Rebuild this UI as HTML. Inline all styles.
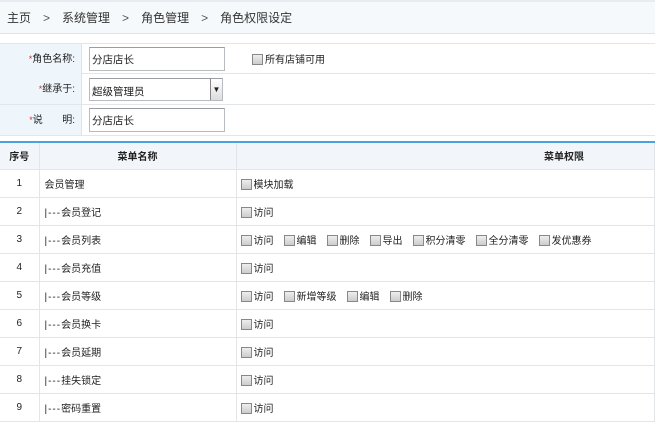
<!DOCTYPE html>
<html><head><meta charset="utf-8"><style>
*{margin:0;padding:0;box-sizing:border-box}
body{width:655px;height:413px;overflow:hidden;background:#fff;font-family:"Liberation Sans","Noto Sans CJK SC",sans-serif;font-size:10px;color:#222}
.bc{height:34px;background:#f6f9fc;border-bottom:1px solid #dde3e8;border-top:2px solid #e8ecf0;line-height:32px;padding-left:7px;font-size:12px;color:#333}
.bc span{margin:0 12px;color:#555}
.form{position:absolute;top:43px;left:0;width:655px}
.fr{height:31px;border-bottom:1px solid #e3e6e9;position:relative}
.fr:first-child{border-top:1px solid #e3e6e9}
.lab{position:absolute;left:0;top:0;width:82px;height:30px;background:#eef5fb;border-right:1px solid #dde3e8;text-align:right;padding-right:6px;line-height:30px;font-size:10px}
.lab b{color:#d33;font-weight:normal;font-size:9px}
.inp{position:absolute;left:89px;top:3px;width:136px;height:24px;border:1px solid #b8bcc0;border-top-color:#9a9ea2;display:flex;align-items:center;padding-left:2px;font-size:10.5px}
.cb{display:inline-block;width:11px;height:11px;border:1px solid #888;background:linear-gradient(#eee,#ccc);vertical-align:-2px;margin-right:2px}
table{position:absolute;top:141px;left:0;width:655px;border-collapse:collapse;border-top:2px solid #4aa3e0}
td,th{height:28px;border-bottom:1px solid #e3e6e9;border-right:1px solid #e3e6e9;font-size:10px;font-weight:normal;padding:0;vertical-align:middle}
th{background:#f2f6fa;font-weight:bold;height:27px}
td.n{text-align:center;width:39px}
td.m{width:197px;padding-left:5px}
td.p{padding-left:4px}
td.p i{font-style:normal;margin-right:10px}
.d{letter-spacing:1px}
</style></head><body>
<div class="bc">主页<span>&gt;</span>系统管理<span>&gt;</span>角色管理<span>&gt;</span>角色权限设定</div>
<div class="form">
<div class="fr"><div class="lab"><b>*</b>角色名称:</div><div class="inp">分店店长</div><div style="position:absolute;left:252px;top:7px"><span class="cb"></span>所有店铺可用</div></div>
<div class="fr"><div class="lab"><b>*</b>继承于:</div><div class="inp" style="top:4px;width:134px;height:23px;padding-top:3px">超级管理员<span style="position:absolute;right:0;top:0;width:12px;height:21px;border-left:1px solid #888;background:linear-gradient(#fff,#ddd);font-size:8px;line-height:21px;text-align:center">▼</span></div></div>
<div class="fr"><div class="lab"><b>*</b>说&nbsp;&nbsp;&nbsp;&nbsp;&nbsp;&nbsp;&nbsp;明:</div><div class="inp">分店店长</div></div>
</div>
<table>
<tr><th style="width:39px">序号</th><th>菜单名称</th><th style="text-align:right;padding-right:70px">菜单权限</th></tr>
<tr><td class="n">1</td><td class="m">会员管理</td><td class="p"><i><span class="cb"></span>模块加载</i></td></tr>
<tr><td class="n">2</td><td class="m"><span class="d">|---</span>会员登记</td><td class="p"><i><span class="cb"></span>访问</i></td></tr>
<tr><td class="n">3</td><td class="m"><span class="d">|---</span>会员列表</td><td class="p"><i><span class="cb"></span>访问</i><i><span class="cb"></span>编辑</i><i><span class="cb"></span>删除</i><i><span class="cb"></span>导出</i><i><span class="cb"></span>积分清零</i><i><span class="cb"></span>全分清零</i><i><span class="cb"></span>发优惠券</i></td></tr>
<tr><td class="n">4</td><td class="m"><span class="d">|---</span>会员充值</td><td class="p"><i><span class="cb"></span>访问</i></td></tr>
<tr><td class="n">5</td><td class="m"><span class="d">|---</span>会员等级</td><td class="p"><i><span class="cb"></span>访问</i><i><span class="cb"></span>新增等级</i><i><span class="cb"></span>编辑</i><i><span class="cb"></span>删除</i></td></tr>
<tr><td class="n">6</td><td class="m"><span class="d">|---</span>会员换卡</td><td class="p"><i><span class="cb"></span>访问</i></td></tr>
<tr><td class="n">7</td><td class="m"><span class="d">|---</span>会员延期</td><td class="p"><i><span class="cb"></span>访问</i></td></tr>
<tr><td class="n">8</td><td class="m"><span class="d">|---</span>挂失锁定</td><td class="p"><i><span class="cb"></span>访问</i></td></tr>
<tr><td class="n">9</td><td class="m"><span class="d">|---</span>密码重置</td><td class="p"><i><span class="cb"></span>访问</i></td></tr>
</table>
</body></html>
